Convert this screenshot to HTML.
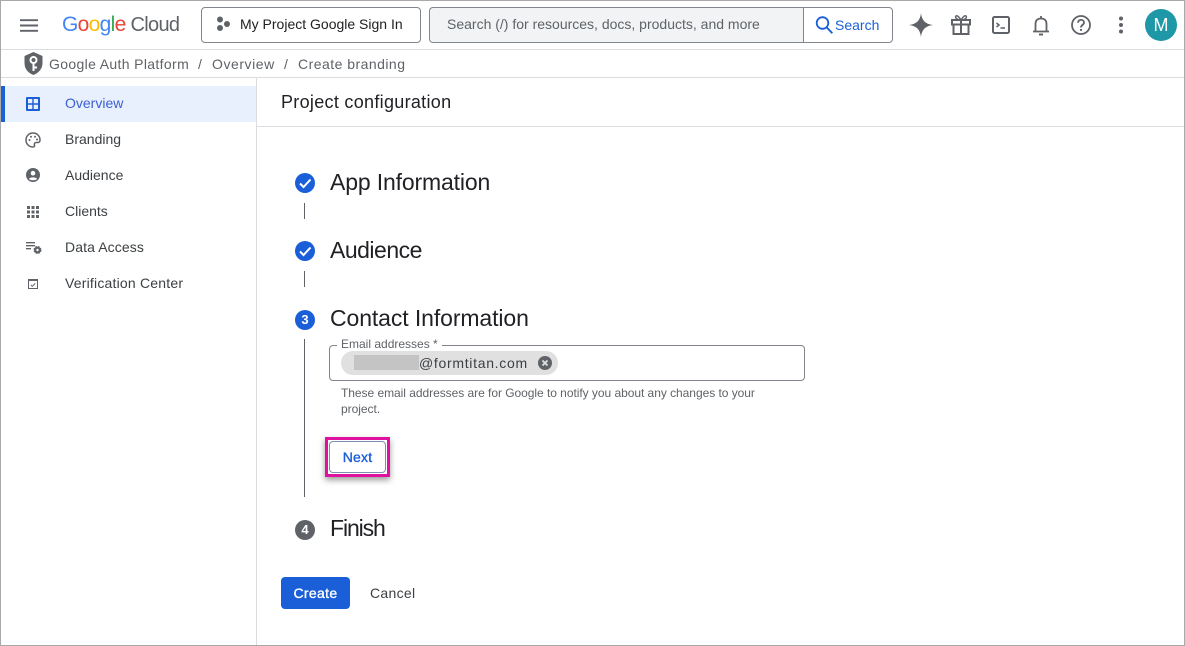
<!DOCTYPE html>
<html><head><meta charset="utf-8"><style>
html,body{margin:0;padding:0;background:#fff}
#p{position:relative;width:1185px;height:646px;overflow:hidden;background:#fff;font-family:"Liberation Sans",sans-serif;color:#202124}
#p>*{position:absolute}
.t{white-space:nowrap;line-height:20px}
.r{background:#dadce0}
.n{font-size:14px;color:#3c4043;left:65px}
.h{font-size:23px;left:330px;line-height:28px;white-space:nowrap;color:#202124}
.bc{font-size:14px;color:#5f6368;top:54px}
.v{width:1px;left:304px;background:#5f6368}
svg{display:block}
</style></head><body><div id="p">
<div style="left:0;top:0;width:1185px;height:1px;background:#a9a9a9"></div>
<div style="left:0;top:0;width:1px;height:646px;background:#a9a9a9"></div>
<div style="left:1184px;top:0;width:1px;height:646px;background:#a9a9a9"></div>
<div style="left:0;top:645px;width:1185px;height:1px;background:#a9a9a9"></div>

<svg style="left:20px;top:19px" width="18" height="13"><path d="M0 1.200h18M0 6.500h18M0 11.800h18" stroke="#5f6368" stroke-width="1.900"/></svg>
<div class="t" style="left:62px;top:12px;font-size:21px;line-height:26px;letter-spacing:-.7px"><span style="color:#4285f4">G</span><span style="color:#ea4335">o</span><span style="color:#fbbc04">o</span><span style="color:#4285f4">g</span><span style="color:#34a853">l</span><span style="color:#ea4335">e</span><span style="color:#5f6368;margin-left:5px;font-size:20px">Cloud</span></div>

<div style="left:201px;top:7px;width:218px;height:34px;border:1px solid #80868b;border-radius:4px"></div>
<svg style="left:215px;top:16px" width="16" height="17"><circle cx="5" cy="3.500" r="3" fill="#5f6368"/><circle cx="5" cy="12" r="3" fill="#5f6368"/><circle cx="12" cy="8" r="3" fill="#5f6368"/></svg>
<div class="t" style="left:240px;top:14px;font-size:14px;color:#202124">My Project Google Sign In</div>

<div style="left:429px;top:7px;width:373px;height:34px;border:1px solid #80868b;border-right:0;border-radius:4px 0 0 4px;background:#f1f3f4"></div>
<div class="t" style="left:447px;top:14px;font-size:14px;color:#5f6368">Search (/) for resources, docs, products, and more</div>
<div style="left:803px;top:7px;width:88px;height:34px;border:1px solid #80868b;border-radius:0 4px 4px 0;background:#fff"></div>
<svg style="left:814px;top:15px" width="20" height="20"><circle cx="8.500" cy="8" r="5.800" fill="none" stroke="#1a5fd8" stroke-width="1.800"/><path d="M12.800 12.500l5.500 5.700" stroke="#1a5fd8" stroke-width="1.900"/></svg>
<div class="t" style="left:835px;top:15px;font-size:14px;color:#1a5fd8">Search</div>

<svg style="left:909px;top:13px" width="24" height="24"><path d="M12 0C12.800 7 16 11 24 12 16 13 12.800 17 12 24 11.200 17 8 13 0 12 8 11 11.200 7 12 0Z" fill="#5f6368"/></svg>
<svg style="left:951px;top:14px" width="20" height="21" fill="none" stroke="#5f6368" stroke-width="2"><path d="M1 6h18v4.500H1zM2.500 10.500V20h15v-9.500M10 6v14"/><path d="M10 6C8 3 6.500 1 5 2 3.500 3.500 6 6 10 6 14 6 16.500 3.500 15 2 13.500 1 12 3 10 6Z" stroke-width="1.500"/></svg>
<svg style="left:992px;top:16px" width="18" height="18" fill="none" stroke="#5f6368"><rect x="1" y="1" width="16" height="16" rx="1.500" stroke-width="2"/><path d="M4.500 7l2.500 2-2.500 2M8.500 12h4.500" stroke-width="1.500"/></svg>
<svg style="left:1032px;top:15px" width="18" height="21" fill="none" stroke="#5f6368" stroke-width="1.800"><path d="M3.500 16V9C3.500 5.500 5.500 3.500 9 3.500S14.500 5.500 14.500 9V16M1 16.500H17M9 1V3.500"/><path d="M7 19.500h4" stroke-width="2"/></svg>
<svg style="left:1071px;top:15px" width="20" height="20" fill="none" stroke="#5f6368" stroke-width="1.800"><circle cx="10" cy="10" r="9"/><path d="M7 7.800C7 3.800 13 4.200 13 7.500 13 10 10 9.800 10 12.500"/><path d="M10 14v1.800" stroke-width="2"/></svg>
<svg style="left:1119px;top:16px" width="4" height="18" fill="#5f6368"><circle cx="2" cy="2.500" r="2"/><circle cx="2" cy="9" r="2"/><circle cx="2" cy="15.500" r="2"/></svg>
<div style="left:1145px;top:9px;width:32px;height:32px;border-radius:50%;background:#1e98a6;color:#fff;font-size:18px;line-height:32px;text-align:center">M</div>

<div class="r" style="left:1px;top:49px;width:1183px;height:1px"></div>
<svg style="left:24px;top:52px" width="19" height="23"><path d="M9.500 0L18.500 4v7c0 6-4 10-9 12C4 21 .5 17 .5 11V4Z" fill="#5f6368"/><circle cx="9.500" cy="8" r="3" fill="none" stroke="#fff" stroke-width="2"/><path d="M9.500 11v8M9.500 15.500h3.500" stroke="#fff" stroke-width="2"/></svg>
<div class="t bc" style="left:49px;letter-spacing:.35px">Google Auth Platform</div>
<div class="t bc" style="left:198px">/</div>
<div class="t bc" style="left:212px;letter-spacing:.55px">Overview</div>
<div class="t bc" style="left:284px">/</div>
<div class="t bc" style="left:298px;letter-spacing:.47px">Create branding</div>
<div class="r" style="left:1px;top:77px;width:1183px;height:1px"></div>

<div class="r" style="left:256px;top:78px;width:1px;height:567px"></div>
<div style="left:1px;top:86px;width:255px;height:36px;background:#e8f0fe"></div>
<div style="left:1px;top:86px;width:4px;height:36px;background:#1a5fd8"></div>
<svg style="left:26px;top:97px" width="14" height="14"><rect width="14" height="14" rx="1" fill="#1a5fd8"/><path d="M2 2h4.300v4.300H2zM7.700 2H12v4.300H7.700zM2 7.700h4.300V12H2zM7.700 7.700H12V12H7.700z" fill="#e8f0fe"/></svg>
<div class="t n" style="top:93px;color:#3b5fd0">Overview</div>

<svg style="left:25px;top:132px" width="16" height="16" fill="none" stroke="#5f6368" stroke-width="1.500"><path d="M8 1C4 1 1 4 1 8s3 7 7 7c1.500 0 1.800-1 1.500-1.800C9 12 9.500 10.500 11 10.500h2c1.200 0 2-1 2-2.500C15 4 12 1 8 1Z"/><circle cx="4.500" cy="8" r="1" fill="#5f6368" stroke="none"/><circle cx="6" cy="4.800" r="1" fill="#5f6368" stroke="none"/><circle cx="10" cy="4.800" r="1" fill="#5f6368" stroke="none"/><circle cx="12" cy="7.500" r="1" fill="#5f6368" stroke="none"/></svg>
<div class="t n" style="top:129px">Branding</div>

<svg style="left:26px;top:168px" width="14" height="14"><circle cx="7" cy="7" r="7" fill="#5f6368"/><circle cx="7" cy="5.200" r="2.300" fill="#fff"/><path d="M2.800 11C4 8.800 10 8.800 11.200 11 9.500 12.600 4.500 12.600 2.800 11Z" fill="#fff"/></svg>
<div class="t n" style="top:165px">Audience</div>

<svg style="left:27px;top:206px" width="12" height="12" fill="#5f6368"><path d="M0 0h3v3H0zM4.500 0h3v3h-3zM9 0h3v3H9zM0 4.500h3v3H0zM4.500 4.500h3v3h-3zM9 4.500h3v3H9zM0 9h3v3H0zM4.500 9h3v3h-3zM9 9h3v3H9z"/></svg>
<div class="t n" style="top:201px">Clients</div>

<svg style="left:26px;top:242px" width="16" height="12"><path d="M0 .7h9M0 3.700h9M0 6.700h5" stroke="#5f6368" stroke-width="1.300"/><circle cx="11.500" cy="8" r="2.300" fill="none" stroke="#5f6368" stroke-width="2.200"/><circle cx="11.500" cy="8" r="3.500" fill="none" stroke="#5f6368" stroke-width="1" stroke-dasharray="1.800 1"/></svg>
<div class="t n" style="top:237px;letter-spacing:.1px">Data Access</div>

<svg style="left:28px;top:279px" width="10" height="10" fill="none" stroke="#5f6368"><rect x=".5" y=".5" width="9" height="9" stroke-width="1"/><path d="M0 1.200h10" stroke-width="1.500"/><path d="M2.800 5.800l1.500 1.500 3-3" stroke-width="1"/></svg>
<div class="t n" style="top:273px;letter-spacing:.2px">Verification Center</div>

<div class="t" style="left:281px;top:90px;font-size:18px;line-height:24px;color:#202124;letter-spacing:.3px">Project configuration</div>
<div class="r" style="left:257px;top:126px;width:927px;height:1px"></div>

<svg style="left:295px;top:173px" width="20" height="20"><circle cx="10" cy="10" r="10" fill="#1a5fd8"/><path d="M5 10.500l3.500 3.500 7-7.500" fill="none" stroke="#fff" stroke-width="2"/></svg>
<div class="h" style="top:168px;letter-spacing:-.15px">App Information</div>
<div class="v" style="top:203px;height:16px"></div>
<svg style="left:295px;top:241px" width="20" height="20"><circle cx="10" cy="10" r="10" fill="#1a5fd8"/><path d="M5 10.500l3.500 3.500 7-7.500" fill="none" stroke="#fff" stroke-width="2"/></svg>
<div class="h" style="top:236px;letter-spacing:-.5px">Audience</div>
<div class="v" style="top:271px;height:16px"></div>
<div style="left:295px;top:310px;width:20px;height:20px;border-radius:50%;background:#1a5fd8;color:#fff;font-size:13px;font-weight:bold;line-height:20px;text-align:center">3</div>
<div class="h" style="top:304px;letter-spacing:-.1px">Contact Information</div>
<div class="v" style="top:339px;height:158px"></div>

<div style="left:329px;top:345px;width:474px;height:34px;border:1px solid #80868b;border-radius:4px"></div>
<div class="t" style="left:337px;top:336px;font-size:12px;line-height:16px;color:#5f6368;background:#fff;padding:0 4px">Email addresses *</div>
<div style="left:341px;top:351px;width:217px;height:24px;border-radius:12px;background:#e0e0e0"></div>
<div style="left:354px;top:355px;width:65px;height:15px;background:#c4c4c4"></div>
<div class="t" style="left:419px;top:353px;font-size:14px;color:#3c4043;letter-spacing:.7px">@formtitan.com</div>
<svg style="left:538px;top:356px" width="14" height="14"><circle cx="7" cy="7" r="7" fill="#5f6368"/><path d="M4.500 4.500l5 5M9.500 4.500l-5 5" stroke="#e0e0e0" stroke-width="1.800"/></svg>
<div style="left:341px;top:385px;width:440px;font-size:12px;line-height:16px;color:#5f6368;letter-spacing:-.04px">These email addresses are for Google to notify you about any changes to your project.</div>

<div style="left:325px;top:437px;width:65px;height:40px;box-sizing:border-box;border:3px solid #e0119f;box-shadow:0 3px 6px rgba(0,0,0,.4);background:#fff"></div>
<div style="left:329px;top:441px;width:57px;height:32px;box-sizing:border-box;border:1px solid #7f8fb0;border-radius:4px;background:#fff;color:#1a5fd8;font-size:14px;-webkit-text-stroke:.35px #1a5fd8;line-height:30px;text-align:center;letter-spacing:.2px">Next</div>

<div style="left:295px;top:520px;width:20px;height:20px;border-radius:50%;background:#5f6368;color:#fff;font-size:13px;font-weight:bold;line-height:20px;text-align:center">4</div>
<div class="h" style="top:514px;letter-spacing:-1.1px">Finish</div>

<div style="left:281px;top:577px;width:69px;height:32px;border-radius:4px;background:#1a5fd8;color:#fff;font-size:14px;-webkit-text-stroke:.35px #fff;line-height:32px;text-align:center;letter-spacing:.35px">Create</div>
<div class="t" style="left:370px;top:583px;font-size:14px;color:#3c4043;letter-spacing:.3px">Cancel</div>
</div></body></html>
